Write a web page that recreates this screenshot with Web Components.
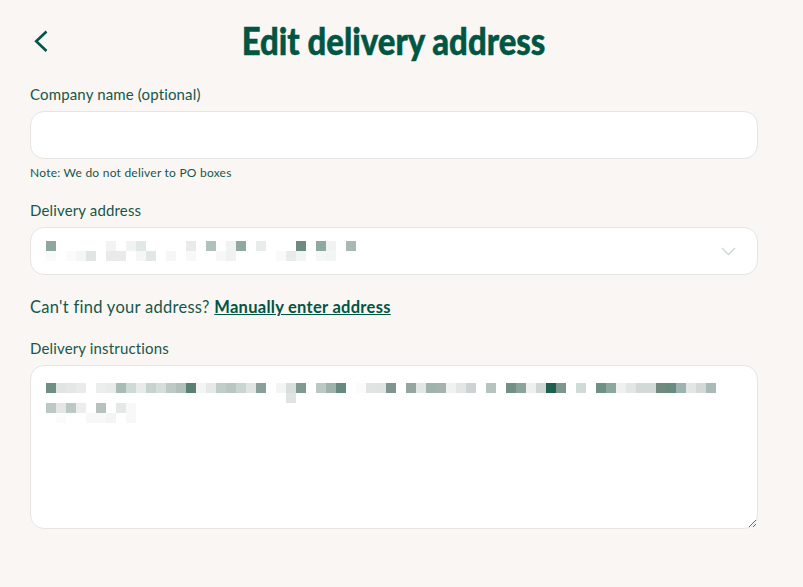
<!DOCTYPE html>
<html lang="en">
<head>
<meta charset="utf-8">
<title>Edit delivery address</title>
<style>
  html, body { margin: 0; background: #f9f6f3; }
</style>
</head>
<body>
<x-address-page>
  <x-page-header>Edit delivery address</x-page-header>
  <x-form-field label="Company name (optional)" note="Note: We do not deliver to PO boxes">
    <x-text-input></x-text-input>
  </x-form-field>
  <x-form-field label="Delivery address">
    <x-select-box>
      <x-mosaic rows="0:8fa89f 6:f3f3f3 8:f0f3f2 9:e2e8e6 14:e8ebea 16:b0c2bc 18:f0f3f2 19:8fa8a0 21:e8ecea 25:6f8a80 27:8fa8a0 28:f0f3f2 30:a8b8b4|0:fafafa 2:fbfbfb 3:f5f5f5 4:e0e5e3 6:e8ebe9 7:e8ebe9 9:f5f6f6 10:e2e7e5 12:f6f6f6 14:f8f8f8 17:f7f7f7 18:f0f2f1 23:fafafa 24:e8ebea 25:f3f5f4 27:f5f6f6 28:f3f5f4"></x-mosaic>
    </x-select-box>
  </x-form-field>
  <x-address-help>Can't find your address? <a href="#">Manually enter address</a></x-address-help>
  <x-form-field label="Delivery instructions">
    <x-text-area>
      <x-mosaic rows="0:6f8f85 1:e0e5e3 2:e3e8e6 3:e8ebea 5:ebeeed 6:e8ebea 7:a9bbb5 8:cddad6 9:e8ebea 10:c8d3d0 11:d5dedb 12:bcc9c5 13:b0c0bb 14:5a8075 15:f3f5f4 16:e5e9e8 17:c0cdc9 18:b8c7c2 19:cad5d2 20:e0e5e3 21:88a09a 23:f3f4f4 24:d8dedc 25:7f9a92 27:bbc8c4 28:a0b2ac 29:658a7e 31:fbfbfb 32:e0e5e3 33:dfe4e2 34:7f9690 36:95a5a0 37:e2e6e5 38:9db3ac 39:a5b3af 40:eff2f1 41:e2e6e5 42:cdd3d2 44:b5c4bf 46:739085 47:8aa39c 48:eef0f0 49:cfd6d4 50:1f5f50 51:7f9690 53:d0dbd8 55:6f9085 56:8aa8a0 57:eff1f1 58:e2e6e5 59:d2d9d7 60:d2d9d7 61:72897f 62:688a7f 63:9db3b0 64:e2e6e5 65:d2d9d7 66:abbab6|24:dfe3e2|0:bcc8c4 1:e2e6e5 2:bcc8c4 3:eceeee 5:b5c2be 7:e5e8e7 8:f8f8f8|1:fbfbfb 4:f8f8f8 5:f8f8f8 6:f3f4f4 8:f8f8f8"></x-mosaic>
    </x-text-area>
  </x-form-field>
</x-address-page>

<script>
class AddressPage extends HTMLElement {
  constructor() {
    super();
    this.attachShadow({ mode: 'open' }).innerHTML = `
      <style>
        :host {
          display: flex;
          flex-direction: column;
          padding: 0 45px 0 30px;
          color: #17574a;
          font-family: Lato, "Liberation Sans", sans-serif;
        }
      </style>
      <slot></slot>
    `;
  }
}

class PageHeader extends HTMLElement {
  constructor() {
    super();
    this.attachShadow({ mode: 'open' }).innerHTML = `
      <style>
        :host {
          display: grid;
          grid-template-columns: 1fr auto 1fr;
          align-items: center;
          height: 84px;
        }
        svg { display: block; margin-left: 3px; }
        h1 {
          margin: 0 0 4px;
          color: #005543;
          font: 900 38px/1 Lato, sans-serif;
          white-space: nowrap;
          transform: scaleX(.865);
          -webkit-text-stroke: .5px #005543;
        }
      </style>
      <svg width="16" height="24" viewBox="0 0 16 24" fill="none" stroke="#005543" stroke-width="2.6">
        <path d="M13.5 1.5 3.2 11.2 13.5 21"/>
      </svg>
      <h1><slot></slot></h1>
      <span></span>
    `;
  }
}

class FormField extends HTMLElement {
  constructor() {
    super();
    this.attachShadow({ mode: 'open' }).innerHTML = `
      <style>
        :host { display: block; }
        label {
          display: block;
          margin-bottom: 7px;
          font-size: 15px;
          line-height: 20px;
          letter-spacing: .15px;
        }
        p { margin: 7px 0 20px; font-size: 12px; line-height: 14px; letter-spacing: .23px; }
        p:empty { display: none; }
      </style>
      <label></label>
      <slot></slot>
      <p></p>
    `;
    this.shadowRoot.querySelector('label').textContent = this.getAttribute('label');
    this.shadowRoot.querySelector('p').textContent = this.getAttribute('note') || '';
  }
}

class TextInput extends HTMLElement {
  constructor() {
    super();
    this.attachShadow({ mode: 'open' }).innerHTML = `
      <style>
        :host { display: block; }
        input {
          display: block;
          box-sizing: border-box;
          width: 100%;
          height: 48px;
          padding: 0 15px;
          background: #fff;
          border: 1px solid #e6e5e2;
          border-radius: 14px;
          outline: none;
          font: inherit;
        }
      </style>
      <input type="text">
    `;
  }
}

class SelectBox extends HTMLElement {
  constructor() {
    super();
    this.attachShadow({ mode: 'open' }).innerHTML = `
      <style>
        :host {
          display: flex;
          align-items: center;
          justify-content: space-between;
          box-sizing: border-box;
          height: 48px;
          padding: 0 21px 0 15px;
          background: #fff;
          border: 1px solid #e6e5e2;
          border-radius: 14px;
        }
        svg { display: block; }
      </style>
      <slot></slot>
      <svg width="15" height="9" viewBox="0 0 15 9" fill="none" stroke="#c8d5d1" stroke-width="1.3">
        <path d="M1 1 7.5 7.5 14 1"/>
      </svg>
    `;
  }
}

class AddressHelp extends HTMLElement {
  constructor() {
    super();
    this.attachShadow({ mode: 'open' }).innerHTML = `
      <style>
        :host {
          display: block;
          margin: 21px 0 20px;
          font-size: 16.5px;
          line-height: 22px;
          letter-spacing: .28px;
        }
        ::slotted(a) { color: #005543; font-weight: 700; }
      </style>
      <slot></slot>
    `;
  }
}

class TextArea extends HTMLElement {
  constructor() {
    super();
    this.attachShadow({ mode: 'open' }).innerHTML = `
      <style>
        :host { display: block; }
        div {
          box-sizing: border-box;
          height: 164px;
          padding: 17px 15px;
          background: #fff;
          border: 1px solid #e6e5e2;
          border-radius: 14px;
          overflow: auto;
          resize: vertical;
        }
      </style>
      <div><slot></slot></div>
    `;
  }
}

// blurred-out customer text: rows split on |, cells as column:colour
class Mosaic extends HTMLElement {
  constructor() {
    super();
    const shadowRoot = this.attachShadow({ mode: 'open' });
    shadowRoot.innerHTML = `
      <style>
        :host {
          display: grid;
          grid-auto-rows: 10px;
          grid-auto-columns: 10px;
        }
      </style>
    `;
    this.getAttribute('rows').split('|').forEach((row, rowIndex) => {
      row.split(' ').forEach(cell => {
        const [col, colour] = cell.split(':');
        const el = document.createElement('span');
        el.style.gridRow = rowIndex + 1;
        el.style.gridColumn = Number(col) + 1;
        el.style.background = '#' + colour;
        shadowRoot.appendChild(el);
      });
    });
  }
}

customElements.define('x-address-page', AddressPage);
customElements.define('x-page-header', PageHeader);
customElements.define('x-form-field', FormField);
customElements.define('x-text-input', TextInput);
customElements.define('x-select-box', SelectBox);
customElements.define('x-address-help', AddressHelp);
customElements.define('x-text-area', TextArea);
customElements.define('x-mosaic', Mosaic);
</script>
</body>
</html>
